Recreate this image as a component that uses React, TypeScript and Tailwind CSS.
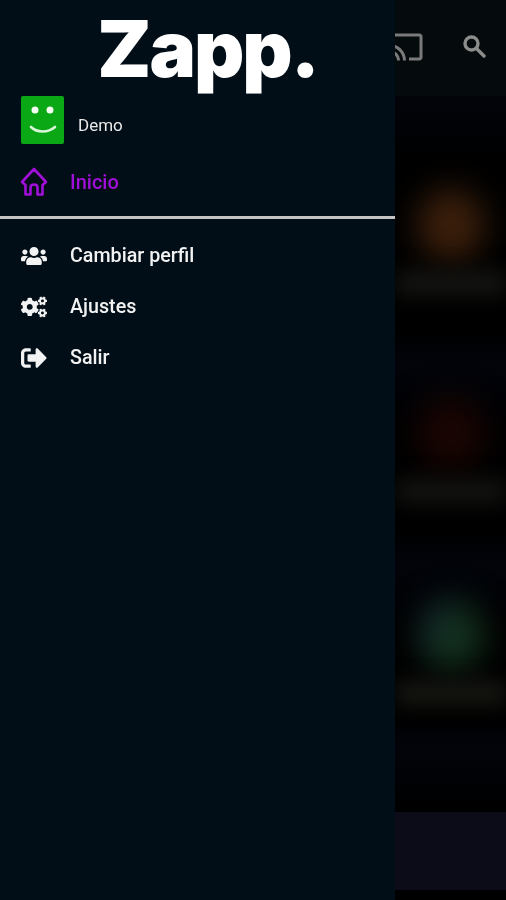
import { FaCogs, FaSignOutAlt, FaUsers } from "react-icons/fa";
import { MdCast } from "react-icons/md";

const menuRows = [
  { label: "Cambiar perfil", icon: <FaUsers size={26} /> },
  { label: "Ajustes", icon: <FaCogs size={26} /> },
  { label: "Salir", icon: <FaSignOutAlt size={26} /> },
];

const Smiley = () => (
  <svg viewBox="0 0 43 48" className="w-[43px] h-[48px] rounded-[2px]">
    <rect width="43" height="48" fill="#0aa814" />
    <circle cx="14" cy="14" r="3.5" fill="#f2fff2" />
    <circle cx="29" cy="14" r="3.5" fill="#f2fff2" />
    <path d="M10 31 C16 37 27 37 34 31" fill="none" stroke="#d8f5d8" strokeWidth="2.6" strokeLinecap="round" />
  </svg>
);

const HomeIcon = () => (
  <svg viewBox="0 0 28 30" className="w-[28px] h-[30px]" fill="none" stroke="#a010d8" strokeWidth="2.6" strokeLinejoin="round">
    <path d="M14 2 L26 15 L22.5 18 V27.5 H17.5 V20.5 Q17.5 17.5 14 17.5 Q10.5 17.5 10.5 20.5 V27.5 H5.5 V18 L2 15 Z" />
  </svg>
);

const SearchIcon = () => (
  <svg viewBox="0 0 24 24" className="w-[24px] h-[24px] ml-[38px] mb-[4px] blur-[0.5px]" fill="none" stroke="#8c8c8c" strokeWidth="3.4">
    <circle cx="9.5" cy="9.5" r="6.5" />
    <path d="M14.5 14.5 L22 22" strokeLinecap="round" />
  </svg>
);

const BlurredCard = ({ glow, caption, height }: { glow: string; caption: string; height: string }) => (
  <div className={`flex flex-col items-center ${height}`}>
    <div className={`w-[66px] h-[72px] rounded-full blur-[16px] ${glow}`} />
    <div className={`w-[110px] h-[24px] mt-[10px] blur-[10px] ${caption}`} />
  </div>
);

export default function App() {
  return (
    <div className="flex w-[506px] h-[900px] overflow-hidden bg-black font-['Roboto',sans-serif]">
      <aside className="relative z-10 w-[395px] h-full shrink-0 flex flex-col bg-[#020e17] text-[#f2f2f2]">
        <div className="h-[96px] flex justify-center pl-[20px] pt-[1px]">
          <span className="font-['Inter',sans-serif] font-black text-[78px] leading-[95px] tracking-[-2px] text-white blur-[0.5px]">
            Zapp.
          </span>
        </div>
        <div className="flex items-center pl-[21px] h-[48px]">
          <Smiley />
          <span className="ml-[14px] mt-[12px] text-[17px] text-[#e8e8e8] blur-[0.4px]">Demo</span>
        </div>
        <div className="flex items-center pl-[20px] h-[30px] mt-[23px]">
          <HomeIcon />
          <span className="ml-[22px] text-[20px] font-medium text-[#a010d8] blur-[0.4px]">Inicio</span>
        </div>
        <div className="h-[3px] mt-[19px] bg-[#c4c4c4]" />
        <nav className="flex flex-col pt-[11px]">
          {menuRows.map((row) => (
            <div key={row.label} className="flex items-center h-[51px] pl-[21px]">
              <span className="w-[26px] flex justify-center blur-[0.4px]">{row.icon}</span>
              <span className="ml-[23px] text-[19.7px] font-medium blur-[0.4px]">{row.label}</span>
            </div>
          ))}
        </nav>
      </aside>

      <main className="flex-1 h-full flex flex-col">
        <header className="h-[96px] shrink-0 flex items-center bg-[#050a0c]">
          <MdCast size={36} className="ml-[-7px] mb-[2px] blur-[0.5px] text-[#7a7a7a]" />
          <SearchIcon />
        </header>
        <div className="flex-1 flex flex-col pt-[93px] bg-[linear-gradient(#02040a_0px,#000_70px,#000_230px,#02040a_270px,#000_340px,#000_430px,#02040a_470px,#000_540px,#000_620px,#02040a_650px,#000_716px)]">
          <BlurredCard glow="bg-[#3c1f0b]" caption="bg-[#151512]" height="h-[208px]" />
          <BlurredCard glow="bg-[#1a0503]" caption="bg-[#131311]" height="h-[202px]" />
          <BlurredCard glow="bg-[linear-gradient(120deg,#162a3c,#12301c_55%)]" caption="bg-[#161612]" height="h-[110px]" />
        </div>
        <div className="h-[78px] shrink-0 bg-[#0c0c18]" />
        <div className="h-[10px] shrink-0 bg-black" />
      </main>
    </div>
  );
}
